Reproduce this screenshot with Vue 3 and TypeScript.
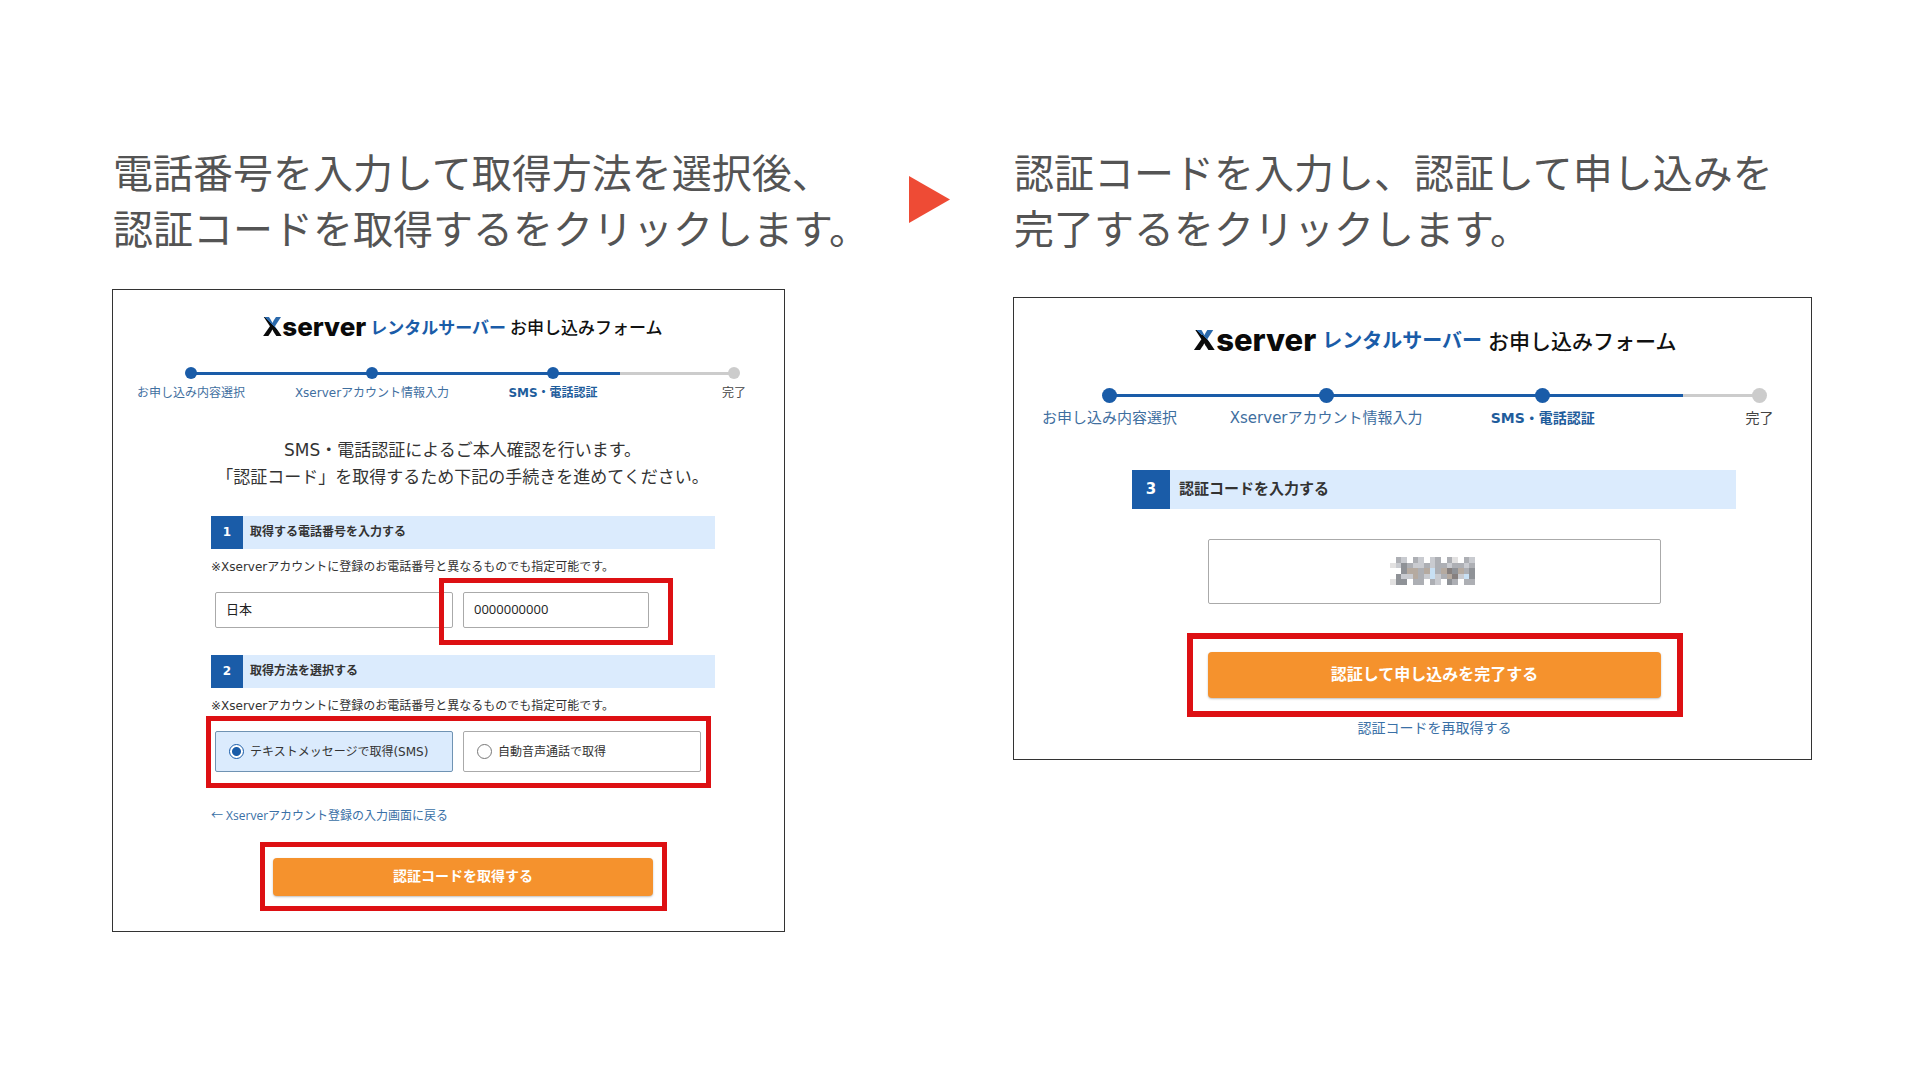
<script setup lang="ts">
import { ref } from 'vue'

type StepState = 'done' | 'current' | 'todo'

interface Step {
  label: string
  state: StepState
}

const steps: Step[] = [
  { label: 'お申し込み内容選択', state: 'done' },
  { label: 'Xserverアカウント情報入力', state: 'done' },
  { label: 'SMS・電話認証', state: 'current' },
  { label: '完了', state: 'todo' },
]

const country = ref('jp')
const phone = ref('0000000000')
const method = ref('sms')
const code = ref('')

// Each row is one line of the mosaic that hides the code, one palette key per cell.
const palette: Record<string, string> = {
  a: '#8f9297',
  b: '#adafb4',
  c: '#c9cbd0',
  d: '#e2e1e1',
  t: '#b5aaa0',
  u: '#c8e0f4',
  p: '#86807f',
}
const mosaic: string[] = [
  '.bc.bc.cb.bd.bc',
  'dcabccbcbbcbbcb',
  '..attbtubtpatba',
  '.acctbcucbtpcua',
  'daa.bb.bc.ab.bb',
]
const cells = mosaic.flatMap((row, y) =>
  [...row].flatMap((key, x) => (key === '.' ? [] : [{ x, y, fill: palette[key] }])),
)
</script>

<template>
  <main class="guide">
    <section class="column">
      <p class="caption">電話番号を入力して取得方法を選択後、<br />認証コードを取得するをクリックします。</p>

      <form class="card card-request" @submit.prevent>
        <h2 class="title">
          <span class="brand"><span class="brand-x">X</span>server</span>
          <span class="product">レンタルサーバー</span>
          <span class="form-name">お申し込みフォーム</span>
        </h2>
        <ol class="steps">
          <li v-for="step in steps" :key="step.label" :class="['step', step.state]">
            <span class="dot"></span>
            <span class="step-label">{{ step.label }}</span>
          </li>
        </ol>

        <p class="intro">SMS・電話認証によるご本人確認を行います。<br />「認証コード」を取得するため下記の手続きを進めてください。</p>

        <div class="fields">
          <h3 class="bar"><span class="number">1</span><span class="bar-text">取得する電話番号を入力する</span></h3>
          <p class="note">※Xserverアカウントに登録のお電話番号と異なるものでも指定可能です。</p>
          <div class="pair">
            <select v-model="country" class="box" aria-label="国">
              <option value="jp">日本</option>
            </select>
            <div class="phone">
              <input v-model="phone" class="box" type="tel" aria-label="電話番号" />
              <span class="mark mark-phone"></span>
            </div>
          </div>

          <h3 class="bar bar-second"><span class="number">2</span><span class="bar-text">取得方法を選択する</span></h3>
          <p class="note">※Xserverアカウントに登録のお電話番号と異なるものでも指定可能です。</p>
          <div class="pair">
            <label class="choice" :class="{ selected: method === 'sms' }">
              <input v-model="method" type="radio" name="method" value="sms" />テキストメッセージで取得(SMS)
            </label>
            <label class="choice" :class="{ selected: method === 'voice' }">
              <input v-model="method" type="radio" name="method" value="voice" />自動音声通話で取得
            </label>
            <span class="mark mark-method"></span>
          </div>

          <a class="back" href="#">← Xserverアカウント登録の入力画面に戻る</a>
          <div class="action">
            <button class="submit" type="submit">認証コードを取得する</button>
            <span class="mark mark-action"></span>
          </div>
        </div>
      </form>
    </section>

    <svg class="arrow" viewBox="0 0 41 47" aria-hidden="true"><path d="M0 0L41 23.500L0 47Z" fill="#ee4b35" /></svg>

    <section class="column">
      <p class="caption">認証コードを入力し、認証して申し込みを<br />完了するをクリックします。</p>

      <form class="card card-verify" @submit.prevent>
        <h2 class="title">
          <span class="brand"><span class="brand-x">X</span>server</span>
          <span class="product">レンタルサーバー</span>
          <span class="form-name">お申し込みフォーム</span>
        </h2>
        <ol class="steps">
          <li v-for="step in steps" :key="step.label" :class="['step', step.state]">
            <span class="dot"></span>
            <span class="step-label">{{ step.label }}</span>
          </li>
        </ol>

        <div class="fields">
          <h3 class="bar"><span class="number">3</span><span class="bar-text">認証コードを入力する</span></h3>
          <div class="verify">
            <div class="code">
              <input v-model="code" class="box" type="text" inputmode="numeric" aria-label="認証コード" />
              <svg class="mosaic" viewBox="0 0 15 5" preserveAspectRatio="none" shape-rendering="crispEdges" aria-hidden="true">
                <rect v-for="cell in cells" :key="`${cell.x}-${cell.y}`" :x="cell.x" :y="cell.y" width="1" height="1" :fill="cell.fill" />
              </svg>
            </div>
            <div class="action">
              <button class="submit" type="submit">認証して申し込みを完了する</button>
              <span class="mark mark-action"></span>
            </div>
            <a class="retry" href="#">認証コードを再取得する</a>
          </div>
        </div>
      </form>
    </section>
  </main>
</template>

<style>
body {
  margin: 0;
  background: #fff;
}
</style>

<style scoped>
* {
  box-sizing: border-box;
}

.guide {
  display: grid;
  grid-template-columns: 797fr 104fr 799fr;
  align-items: start;
  padding: 143px 108px 60px 112px;
  font-family: 'DejaVu Sans', 'Noto Sans CJK JP', sans-serif;
  color: #333;
}

h2,
h3,
p,
ol {
  margin: 0;
  padding: 0;
}

.column {
  min-width: 0;
}

.caption {
  padding-left: 1px;
  font: 400 40px/56px 'Noto Sans CJK JP', sans-serif;
  color: #545454;
  white-space: nowrap;
}

.arrow {
  width: 41px;
  height: 47px;
  margin-top: 33px;
}

.card {
  border: 1px solid #333;
  background: #fff;
}

.card-request {
  margin: 34px 124px 0 0;
  padding: 19px 0 35px 28px;
  font-size: 12px;
  line-height: 18px;
}

.card-verify {
  margin-top: 42px;
  padding: 24px 0 21px 44px;
  font-size: 14px;
  line-height: 20px;
}

.title {
  display: flex;
  justify-content: center;
  align-items: center;
  gap: 4px;
  height: 36px;
  font-family: 'Noto Sans CJK JP', sans-serif;
  font-weight: 500;
  font-size: 17px;
  line-height: 36px;
  white-space: nowrap;
  color: #111;
}

.brand {
  font-family: Inter, sans-serif;
  font-weight: 800;
  font-size: 26px;
  color: #0a0a0a;
}

.brand-x {
  color: transparent;
  background: linear-gradient(to top right, #0a0a0a 57%, #2b69ab 57%) 0 50% / 100% 20px no-repeat;
  background-clip: text;
  -webkit-background-clip: text;
}

.product {
  font-weight: 700;
  color: #1a5ca8;
}

.card-verify .title {
  font-size: 20px;
  gap: 6px;
}

.card-verify .brand {
  font-size: 31px;
}

.card-verify .form-name {
  font-size: 21px;
}

.steps {
  position: relative;
  display: flex;
  justify-content: space-between;
  margin: 22px 44px 0;
  list-style: none;
}

.steps::before {
  content: '';
  position: absolute;
  top: 5px;
  left: 6px;
  right: 6px;
  height: 3px;
  background: linear-gradient(to right, #1a5ca8 79%, #ccc 79%);
}

.card-verify .steps {
  margin-top: 30px;
}

.card-verify .steps::before {
  top: 6px;
  background: linear-gradient(to right, #1a5ca8 88%, #ccc 88%);
}

.step {
  display: flex;
  flex-direction: column;
  align-items: center;
  gap: 5px;
  width: 12px;
  color: #3f6f9f;
  white-space: nowrap;
}

.card-verify .step {
  width: 15px;
}

.card-verify .step.done {
  font-size: 15px;
}

.dot {
  position: relative;
  width: 100%;
  aspect-ratio: 1;
  border-radius: 50%;
  background: #1a5ca8;
}

.step.current {
  font-weight: 700;
  color: #1f5d9c;
}

.step.todo {
  color: #444;
}

.step.todo .dot {
  background: #ccc;
}

.intro {
  margin: 35px 0 25px;
  text-align: center;
  font-size: 17px;
  line-height: 27px;
  white-space: nowrap;
}

.fields {
  margin: 0 69px 0 70px;
}

.card-verify .fields {
  margin: 42px 75px 0 74px;
}

.bar {
  display: flex;
  height: 33px;
  font-size: 12px;
  line-height: 33px;
  background: #dbebfd;
}

.bar-second {
  margin-top: 27px;
}

.number {
  width: 32px;
  margin-right: 7px;
  text-align: center;
  color: #fff;
  background: #1a5ca8;
}

.card-verify .bar {
  height: 39px;
  font-size: 15px;
  line-height: 39px;
}

.card-verify .number {
  width: 38px;
  margin-right: 9px;
}

.note {
  margin: 9px 0 16px;
  white-space: nowrap;
}

.pair {
  position: relative;
  display: grid;
  grid-template-columns: 1fr 1fr;
  gap: 10px;
  margin: 0 14px 0 4px;
}

.box {
  display: block;
  width: 100%;
  height: 36px;
  padding: 0 10px 2px;
  border: 1px solid #aaa;
  border-radius: 2px;
  background: #fff;
  color: #222;
  font: 13px 'Open Sans', 'Noto Sans CJK JP', sans-serif;
  appearance: none;
}

.phone {
  position: relative;
  width: 186px;
}

.choice {
  display: flex;
  align-items: center;
  gap: 6px;
  height: 41px;
  padding-left: 13px;
  border: 1px solid #aaa;
  border-radius: 2px;
  white-space: nowrap;
}

.choice.selected {
  border-color: #6f93b3;
  background: #dbebfd;
}

.choice input {
  appearance: none;
  width: 15px;
  height: 15px;
  margin: 0;
  border: 1px solid #777;
  border-radius: 50%;
  background: #fff;
}

.choice input:checked {
  border-color: #1a5ca8;
  background: radial-gradient(circle, #1a5ca8 4px, #fff 5px);
}

.mark {
  position: absolute;
  border: 5px solid #dd1013;
  pointer-events: none;
}

.mark-phone {
  inset: -14px -24px -17px -24px;
}

.mark-method {
  inset: -15px -10px -16px -9px;
}

.mark-action {
  inset: -16px -14px -15px -13px;
}

a {
  color: #3a70a6;
  text-decoration: none;
}

.back {
  display: block;
  margin-top: 35px;
  font-family: 'Open Sans', 'Noto Sans CJK JP', sans-serif;
}

.action {
  position: relative;
  margin: 33px 62px 0;
}

.submit {
  display: block;
  width: 100%;
  height: 38px;
  padding: 0 0 4px;
  border: 0;
  border-radius: 4px;
  background: #f5922d;
  box-shadow: 0 1px 2px #8888;
  color: #fff;
  font: 700 14px 'Noto Sans CJK JP', sans-serif;
}

.verify {
  margin: 30px 75px 0 76px;
  text-align: center;
}

.code {
  position: relative;
}

.code .box {
  height: 65px;
}

.mosaic {
  position: absolute;
  top: 18px;
  left: calc(50% - 45px);
  width: 85px;
  height: 28px;
}

.card-verify .action {
  margin: 48px 0 20px;
}

.card-verify .submit {
  height: 46px;
  font-size: 16px;
}

.card-verify .mark-action {
  inset: -19px -22px -19px -21px;
  border-width: 6px;
}

.retry {
  display: block;
}
</style>
